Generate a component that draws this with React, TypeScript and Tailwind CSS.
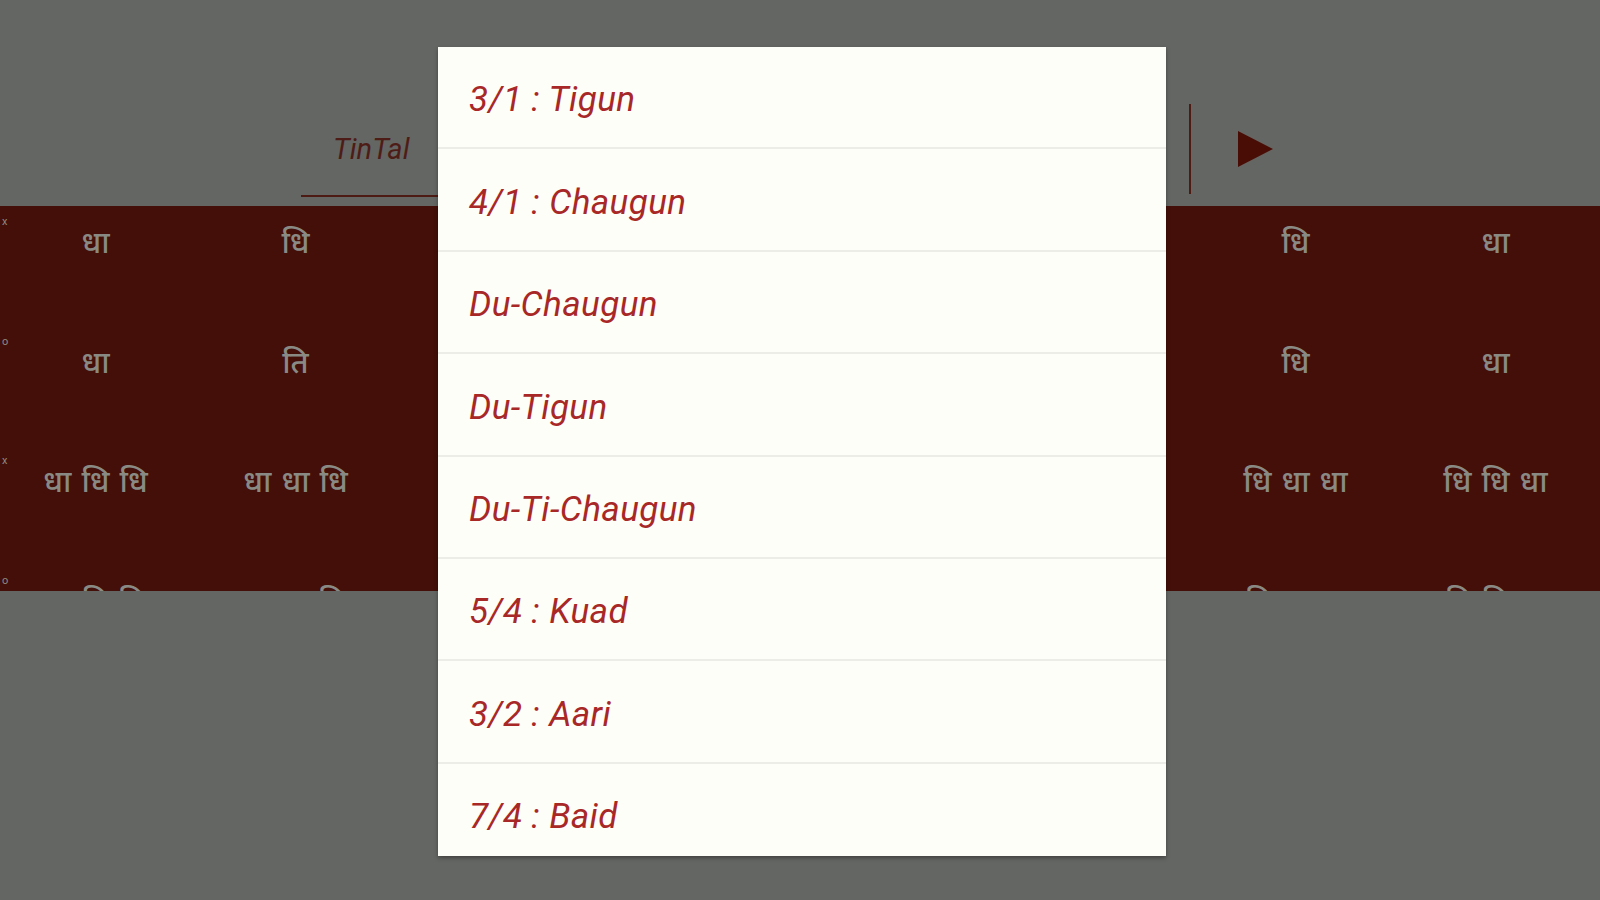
import React from "react";

const rows: { mark: string; cells: string[] }[] = [
  { mark: "x", cells: ["धा", "धि", "धि", "धा", "धा", "धि", "धि", "धा"] },
  { mark: "o", cells: ["धा", "ति", "ति", "ता", "ता", "धि", "धि", "धा"] },
  { mark: "x", cells: ["धा धि धि", "धा धा धि", "धि धा धा", "ति ति ता", "ता धि धि", "धा धा धि", "धि धा धा", "धि धि धा"] },
  { mark: "o", cells: ["ता ति ति", "ता ता ति", "ति ता ता", "धि धि धा", "धा धि धि", "धा धा धि", "ति ता ता", "ति ति ता"] },
];

const options = [
  "3/1 : Tigun",
  "4/1 : Chaugun",
  "Du-Chaugun",
  "Du-Tigun",
  "Du-Ti-Chaugun",
  "5/4 : Kuad",
  "3/2 : Aari",
  "7/4 : Baid",
];

export default function App() {
  return (
    <div
      className="relative w-[1600px] h-[900px] overflow-hidden bg-[#646663]"
      style={{ fontFamily: "Roboto, 'Noto Sans', sans-serif" }}
    >
      {/* dimmed page under the dialog */}
      <div className="flex items-end h-[206px]">
        <div className="ml-[301px] mb-[9px] w-[860px] h-[185px] flex items-end border-b-2 border-[#4e1a14]">
          <span className="ml-[32px] mb-[24px] text-[29px] italic text-[#4e1c16]">TinTal</span>
        </div>
        <div className="ml-[28px] mb-[12px] h-[90px] w-[2px] bg-[#4e1a14]" />
        <div className="ml-[47px] mb-[39px]">
          <svg width="36" height="36" viewBox="0 0 36 36">
            <polygon points="0,0 35,18 0,36" fill="#4a0d06" />
          </svg>
        </div>
      </div>
      <div className="h-[385px] bg-[#430f08] overflow-hidden">
        {rows.map((r, i) => (
          <div key={i} className="relative h-[119.5px] grid grid-cols-8">
            <span className="absolute left-[2px] top-[10px] text-[11px] leading-none text-[#8a8a85]">{r.mark}</span>
            {r.cells.map((c, j) => (
              <div
                key={j}
                className="flex justify-center pt-[16px] pr-[8px] text-[31px] font-medium tracking-[1px] text-[#8a8a85] leading-[38px] whitespace-nowrap"
                style={{ fontFamily: "'Noto Sans', 'Noto Sans Devanagari', 'Lohit Devanagari', sans-serif" }}
              >
                {c}
              </div>
            ))}
          </div>
        ))}
      </div>

      {/* dialog */}
      <div className="absolute left-[438px] top-[47px] w-[728px] h-[809px] bg-[#fefef9] overflow-hidden shadow-[0_2px_4px_rgba(0,0,0,0.35)]">
        {options.map((o) => (
          <div
            key={o}
            className="h-[102.4px] flex items-center pl-[31px] pt-[7px] border-b-2 border-[#ededE8] text-[35px] italic tracking-[0.4px] text-[#a82828]"
          >
            {o}
          </div>
        ))}
      </div>
    </div>
  );
}
